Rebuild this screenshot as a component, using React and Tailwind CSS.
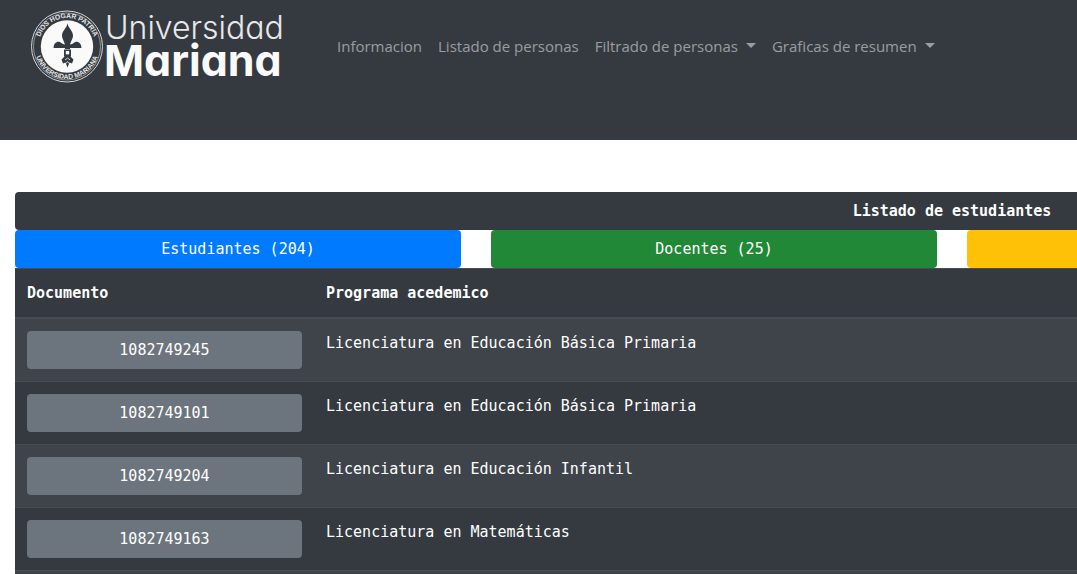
const navItems = [
  { label: "Informacion" },
  { label: "Listado de personas" },
  { label: "Filtrado de personas", menu: true },
  { label: "Graficas de resumen", menu: true },
];

const rows = [
  ["1082749245", "Licenciatura en Educación Básica Primaria"],
  ["1082749101", "Licenciatura en Educación Básica Primaria"],
  ["1082749204", "Licenciatura en Educación Infantil"],
  ["1082749163", "Licenciatura en Matemáticas"],
  ["", ""],
];

function Logo() {
  return (
    <svg width="256" height="80" viewBox="0 0 256 80" role="img" aria-label="Universidad Mariana" className="block">
      <defs>
        <path id="ring-top" d="M9.5 40.5 A28.5 28.5 0 0 1 66.5 40.5" />
        <path id="ring-bottom" d="M5.5 40.5 A32.5 32.5 0 0 0 70.5 40.5" />
      </defs>
      <circle cx="38" cy="40.5" r="35.5" fill="none" stroke="#d5d6d8" strokeWidth="1" />
      <circle cx="38" cy="40.5" r="33.5" fill="none" stroke="#b4b6b9" strokeWidth="0.7" />
      <circle cx="38" cy="40.5" r="26.2" fill="#fafafa" />
      <g fill="#e8e8e9" fontFamily="'Liberation Sans', sans-serif" fontWeight="700" fontSize="6.8" textAnchor="middle">
        <text><textPath href="#ring-top" startOffset="50%">DIOS HOGAR PATRIA</textPath></text>
        <text><textPath href="#ring-bottom" startOffset="50%">UNIVERSIDAD MARIANA</textPath></text>
      </g>
      <g fill="#343a40">
        <path d="M38.5 17.5 C39.3 22 44 25 44 29.5 C44 33 41.5 35 40.8 40 H36.2 C35.5 35 33 33 33 29.5 C33 25 37.7 22 38.5 17.5Z" />
        <path d="M36 42 H24.6 C24.6 38 27 35.8 29.5 35.8 C32 35.8 32.5 38.5 36 38.5 H41 C44.5 38.5 45 35.8 47.5 35.8 C50 35.8 52.4 38 52.4 42 H41 V43 H36Z" />
        <path d="M35 43.5 H42 V50.5 H35Z" />
        <path d="M36 50 H41 L44.5 53.5 L43 57.5 L40.5 56.5 L38.5 61.5 L36.5 56.5 L34 57.5 L32.5 53.5Z" />
      </g>
      <rect x="36.8" y="45" width="3.4" height="3.4" fill="#fafafa" />
      <path d="M36 54 L38.5 52 L41 54 M37 57.5 L38.5 55.5 L40 57.5" fill="none" stroke="#fafafa" strokeWidth="0.8" />
      <g className="font-['Inter',sans-serif] [font-feature-settings:'cv11']">
        <text x="76" y="33" fontSize="32" fontWeight="300" fill="#e8e8e9">Universidad</text>
        <text x="75" y="70" fontSize="43" fontWeight="700" fill="#fafafa">Mariana</text>
      </g>
    </svg>
  );
}

export default function App() {
  return (
    <div className="h-screen overflow-hidden bg-white">
      <header className="flex h-[140px] items-start bg-[#343a40] px-[29px] pt-[6px]">
        <a href="#inicio" className="shrink-0"><Logo /></a>
        <nav className="ml-[52px] flex gap-4 pt-7 font-['Open_Sans',sans-serif] text-[15px] leading-6 whitespace-nowrap text-white/50">
          {navItems.map((item) => (
            <a key={item.label} href="#seccion" className="flex items-center gap-2">
              {item.label}
              {item.menu && (
                <svg width="10" height="5" viewBox="0 0 10 5" fill="currentColor" aria-hidden="true" className="-mt-px">
                  <path d="M0 0H10L5 5Z" />
                </svg>
              )}
            </a>
          ))}
        </nav>
      </header>
      <main className="mt-13 min-w-[1904px] px-[15px] font-['DejaVu_Sans_Mono',monospace] text-[15px] leading-6 text-white">
        <h1 className="rounded bg-[#343a40] py-[7px] text-center font-bold">Listado de estudiantes</h1>
        <div className="grid grid-cols-4 gap-[30px]">
          <button type="button" className="h-[38px] rounded bg-[#007bff]">Estudiantes (204)</button>
          <button type="button" className="h-[38px] rounded bg-[#218838]">Docentes (25)</button>
          <button type="button" aria-label="Administrativos" className="h-[38px] rounded bg-[#ffc107]" />
        </div>
        <table className="w-full table-fixed border-separate border-spacing-0 bg-[#343a40] text-left">
          <thead>
            <tr>
              <th className="w-[299px] border-y border-[#454d55] p-3 font-bold">Documento</th>
              <th className="border-y border-[#454d55] p-3 font-bold">Programa acedemico</th>
            </tr>
          </thead>
          <tbody>
            {rows.map(([id, program]) => (
              <tr key={id} className="odd:bg-white/5">
                <td className="border-t border-[#454d55] p-3 align-top">
                  <button type="button" aria-label={id || "Documento"} className="block h-[38px] w-full rounded bg-[#6c757d]">{id}</button>
                </td>
                <td className="border-t border-[#454d55] p-3 align-top">{program}</td>
              </tr>
            ))}
          </tbody>
        </table>
      </main>
    </div>
  );
}
